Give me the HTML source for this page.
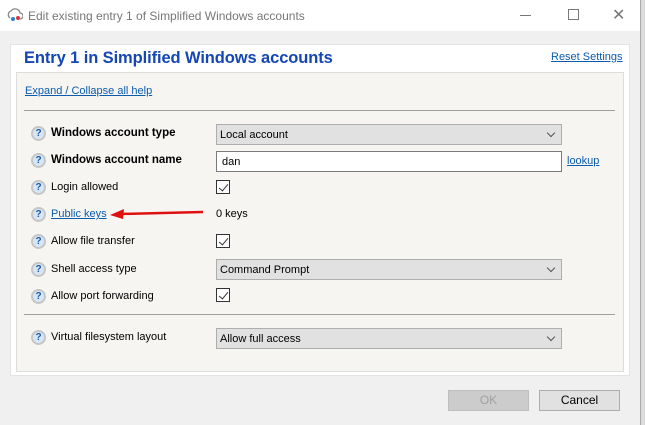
<!DOCTYPE html>
<html><head><style>
*{margin:0;padding:0;box-sizing:border-box}
body{width:645px;height:425px;background:#f0f0f0;font-family:"Liberation Sans",Arial,sans-serif;font-size:11px;color:#000;position:relative;overflow:hidden}
.a{position:absolute}
.title{left:0;top:0;width:640px;height:31px;background:#fff}
.edge{left:640px;top:0;width:5px;height:425px;background:#dcdcdc;border-left:1px solid #aaa}
.white{left:10px;top:44px;width:620px;height:332px;background:#fff;border:1px solid #e3e3e3}
.beige{left:16px;top:72px;width:608px;height:300px;background:#f7f5f2;border:1px solid #ddd}
.lnk{color:#0b5cad;text-decoration:underline}
.hr{height:1px;background:#a0a0a0;left:24px;width:591px}
.q{width:15px;height:15px;border-radius:50%;background:#d7e6f2;border:2px solid #c6c6c6;color:#1a5aa8;font-weight:bold;font-size:10px;line-height:11px;text-align:center;left:31px}
.lb{left:51px}
.b{font-weight:bold;font-size:11.5px}
.sel{left:216px;width:346px;height:21px;background:#e1e1e1;border:1px solid #adadad;padding:4px 0 0 3px}
.sel:after{content:"";position:absolute;right:7px;top:5px;width:5px;height:5px;border-right:1px solid #555;border-bottom:1px solid #555;transform:rotate(45deg)}
.sel.t{background:#fff;border-color:#7a7a7a;padding-left:5px}
.sel.t:after{display:none}
.cb{left:216px;width:14px;height:14px;border:1px solid #333;background:#fff}
.cb:after{content:"";position:absolute;left:4px;top:1px;width:4px;height:8px;border-right:1px solid #333;border-bottom:1px solid #333;transform:rotate(40deg)}
.btn{top:390px;height:21px;width:81px;border:1px solid #adadad;background:#e1e1e1;text-align:center;line-height:19px;font-size:12px}
</style></head><body>
<div class="a title"></div>
<svg class="a" style="left:7px;top:8px" width="16" height="14"><path d="M3 10a4 4 0 0 1 1-7a5 5 0 0 1 9 2a3 3 0 0 1 0 6" fill="none" stroke="#888" stroke-width="1.3"/><circle cx="6" cy="11" r="2" fill="#2a7fd4"/><circle cx="11" cy="10" r="2" fill="#d33"/></svg>
<div class="a" style="left:28px;top:9px;font-size:12px;color:#777">Edit existing entry 1 of Simplified Windows accounts</div>
<div class="a" style="left:520px;top:15px;width:11px;height:1px;background:#777"></div>
<div class="a" style="left:568px;top:9px;width:11px;height:11px;border:1px solid #777"></div>
<div class="a" style="left:612px;top:5px;font-size:16px;color:#777">✕</div>
<div class="a edge"></div>
<div class="a white"></div>
<div class="a beige"></div>
<div class="a" style="left:24px;top:49px;font-size:16.5px;font-weight:bold;color:#1446b4;letter-spacing:-0.1px">Entry 1 in Simplified Windows accounts</div>
<div class="a lnk" style="left:551px;top:51px">Reset Settings</div>
<div class="a lnk" style="left:25px;top:85px">Expand / Collapse all help</div>
<div class="a hr" style="top:110px"></div>
<div class="a q" style="top:126px">?</div><div class="a lb b" style="top:127px">Windows account type</div>
<div class="a sel" style="top:124px">Local account</div>
<div class="a q" style="top:153px">?</div><div class="a lb b" style="top:154px">Windows account name</div>
<div class="a sel t" style="top:151px">dan</div>
<div class="a lnk" style="left:567px;top:155px">lookup</div>
<div class="a q" style="top:180px">?</div><div class="a lb" style="top:181px">Login allowed</div>
<div class="a cb" style="top:180px"></div>
<div class="a q" style="top:207px">?</div><div class="a lb lnk" style="top:208px">Public keys</div>
<svg class="a" style="left:108px;top:208px" width="96" height="12"><path d="M12 6L95 4" stroke="#e01010" stroke-width="2.5"/><path d="M2 7L16 1L15 11Z" fill="#e01010"/></svg>
<div class="a" style="left:216px;top:208px">0 keys</div>
<div class="a q" style="top:234px">?</div><div class="a lb" style="top:235px">Allow file transfer</div>
<div class="a cb" style="top:234px"></div>
<div class="a q" style="top:262px">?</div><div class="a lb" style="top:263px">Shell access type</div>
<div class="a sel" style="top:259px">Command Prompt</div>
<div class="a q" style="top:289px">?</div><div class="a lb" style="top:290px">Allow port forwarding</div>
<div class="a cb" style="top:288px"></div>
<div class="a hr" style="top:314px"></div>
<div class="a q" style="top:330px">?</div><div class="a lb" style="top:331px">Virtual filesystem layout</div>
<div class="a sel" style="top:328px">Allow full access</div>
<div class="a btn" style="left:448px;color:#a0a0a0;background:#ccc;border-color:#bfbfbf">OK</div>
<div class="a btn" style="left:539px">Cancel</div>
</body></html>
